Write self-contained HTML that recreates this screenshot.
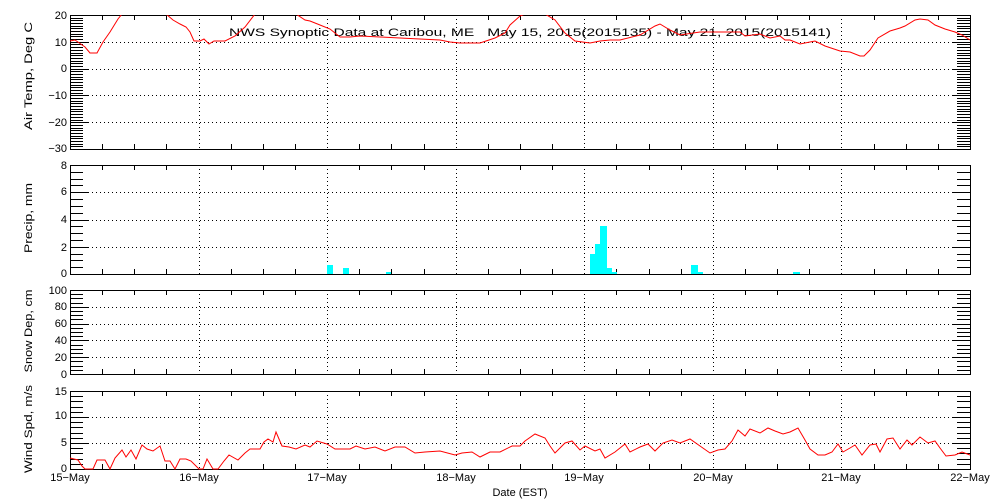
<!DOCTYPE html>
<html><head><meta charset="utf-8"><style>
html,body{margin:0;padding:0;background:#fff;width:1000px;height:500px;overflow:hidden}
svg{display:block}
text{font-family:"Liberation Sans",sans-serif;font-size:11px;fill:#000}
</style></head><body>
<svg id="s" width="1000" height="500" xmlns="http://www.w3.org/2000/svg" shape-rendering="crispEdges">
<g id="g"></g>
<text x="229" y="36" font-size="14" textLength="602" lengthAdjust="spacingAndGlyphs" xml:space="preserve">NWS Synoptic Data at Caribou, ME   May 15, 2015(2015135) - May 21, 2015(2015141)</text>
<g text-anchor="end" font-size="12">
<text x="67" y="19" font-size="12">20</text><text x="67" y="46" font-size="12">10</text><text x="67" y="72" font-size="12">0</text><text x="67" y="99" font-size="12">−10</text><text x="67" y="126" font-size="12">−20</text><text x="67" y="152" font-size="12">−30</text>
<text x="67" y="169" font-size="12">8</text><text x="67" y="195" font-size="12">6</text><text x="67" y="223" font-size="12">4</text><text x="67" y="251" font-size="12">2</text><text x="67" y="277" font-size="12">0</text>
<text x="67" y="294" font-size="12">100</text><text x="67" y="310" font-size="12">80</text><text x="67" y="327" font-size="12">60</text><text x="67" y="344" font-size="12">40</text><text x="67" y="361" font-size="12">20</text><text x="67" y="378" font-size="12">0</text>
<text x="67" y="395" font-size="12">15</text><text x="67" y="419" font-size="12">10</text><text x="67" y="446" font-size="12">5</text><text x="67" y="472" font-size="12">0</text>
</g>
<g text-anchor="middle">
<text transform="translate(32,76) rotate(-90)" font-size="13" textLength="108" lengthAdjust="spacingAndGlyphs">Air Temp, Deg C</text>
<text transform="translate(32,218) rotate(-90)" font-size="13" textLength="70" lengthAdjust="spacingAndGlyphs">Precip, mm</text>
<text transform="translate(32,331) rotate(-90)" font-size="13" textLength="83" lengthAdjust="spacingAndGlyphs">Snow Dep, cm</text>
<text transform="translate(32,429) rotate(-90)" font-size="13" textLength="88" lengthAdjust="spacingAndGlyphs">Wind Spd, m/s</text>
<text x="70" y="481" font-size="12">15−May</text><text x="199" y="481" font-size="12">16−May</text><text x="327" y="481" font-size="12">17−May</text><text x="456" y="481" font-size="12">18−May</text><text x="584" y="481" font-size="12">19−May</text><text x="713" y="481" font-size="12">20−May</text><text x="841" y="481" font-size="12">21−May</text><text x="970" y="481" font-size="12">22−May</text>
<text x="520" y="496" font-size="12">Date (EST)</text>
</g>
<g fill="#00ffff" stroke="none">
<rect x="327" y="265" width="6" height="9"/><rect x="343" y="268" width="6" height="6"/><rect x="386" y="272" width="5" height="2"/>
<rect x="590" y="254" width="5" height="20"/><rect x="595" y="244" width="5" height="30"/><rect x="600" y="226" width="7" height="48"/><rect x="607" y="268" width="5" height="6"/><rect x="612" y="272" width="5" height="2"/>
<rect x="691" y="265" width="7" height="9"/><rect x="698" y="272" width="5" height="2"/><rect x="793" y="272" width="7" height="2"/>
</g>
<g fill="none" stroke="#ff0000" stroke-width="1" shape-rendering="auto">
<svg x="70" y="15" width="900" height="134" viewBox="70 15 900 134" overflow="hidden">
<polyline points="70,41 75,40 85,47 90,53 97,53 103,42 110,32 118,19 122,14 166,14 173,20 180,24 186,27 190,32 194,41 200,41 204,39 209,44 214,41 225,41 235,36 245,27 255,14 296,14 305,20 310,21 320,25 330,29 335,33 340,37 350,37 360,36 380,37 400,38 420,39 440,40 450,42 460,43 480,43 495,38 505,33 510,25 520,16 525,14 545,14 555,20 565,33 575,41 590,43 600,41 610,40 620,40 640,35 655,26 660,24 670,30 680,35 700,32 740,32 745,36 760,34 770,38 780,36 785,40 790,40 800,44 810,42 815,41 825,46 840,51 850,52 860,56 864,56 870,50 878,38 890,31 900,28 905,26 915,20 920,19 928,20 935,25 945,29 955,32 962,35 970,40"/>
</svg>
<polyline points="70,458 78,460 82,466 85,469 93,469 97,460 105,460 110,469 115,458 122,450 126,457 131,450 136,459 142,445 147,449 153,451 160,446 165,461 170,461 175,469 180,459 186,459 191,461 196,466 199,469 203,469 207,459 213,469 218,469 224,461 229,455 238,460 245,453 250,449 260,449 264,442 268,439 273,442 276,432 282,446 289,447 296,449 305,445 310,447 317,441 327,444 335,449 350,449 356,446 365,449 375,447 385,451 395,447 405,447 415,453 425,452 440,451 455,455 462,453 472,452 480,457 490,452 500,452 512,446 520,446 525,441 535,434 545,438 550,446 555,453 565,443 572,441 580,450 585,446 595,451 600,449 605,458 615,452 625,444 630,452 640,447 648,444 655,451 663,443 672,440 680,443 690,439 700,446 710,453 718,450 725,449 732,441 738,430 745,436 750,429 760,433 768,428 775,431 783,434 790,432 798,428 805,440 810,449 818,455 825,455 832,452 838,444 843,452 850,448 855,445 862,455 870,445 876,444 880,452 887,439 893,438 900,449 907,440 912,445 920,437 928,443 935,441 940,448 946,456 955,455 962,452 970,455"/>
</g>
</svg>
<script>
var g=document.getElementById('g'),h='';
function L(x1,y1,x2,y2,d){h+='<line x1="'+x1+'" y1="'+y1+'" x2="'+x2+'" y2="'+y2+'" stroke="#000" stroke-width="1"'+(d?' stroke-dasharray="1 3"':'')+'/>';}
var P=[[15,149,20,-30,1,10],[165,274,8,0,0.5,2],[290,374,100,0,5,20],[391,469,15,0,1,5]];
P.forEach(function(p){
 var t=p[0],b=p[1],v0=p[2],v1=p[3],mi=p[4],ma=p[5];
 h+='<rect x="70.5" y="'+(t+.5)+'" width="900" height="'+(b-t)+'" fill="none" stroke="#000"/>';
 var n=Math.round((v0-v1)/mi);
 for(var i=1;i<n;i++){var y=Math.round(t+(b-t)*i/n)+.5;var v=v0-i*mi;var maj=Math.abs(v/ma-Math.round(v/ma))<1e-6;
  var len=maj?18:13;L(70,y,70+len,y);L(970-len,y,970,y);
  if(maj)L(88,y,952,y,true);}
 for(var k=1;k<28;k++){var x=Math.round(70+900*k/28)+.5;if(k%4==0){L(x,t,x,b,true);}else{L(x,t,x,t+5);L(x,b-5,x,b);}}
});
g.innerHTML=h;
</script>
</body></html>
